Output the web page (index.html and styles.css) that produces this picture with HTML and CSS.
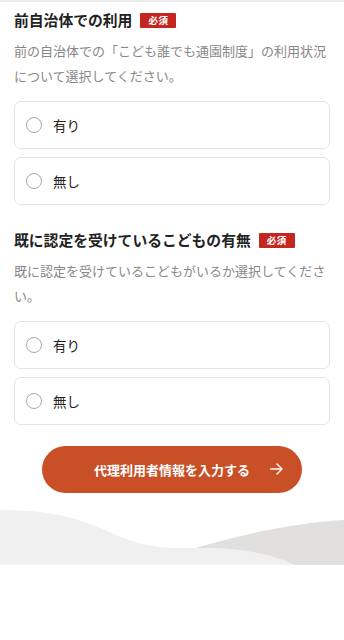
FILE: index.html
```html
<!DOCTYPE html>
<html lang="ja">
<head>
<meta charset="utf-8">
<link rel="stylesheet" href="styles.css">
</head>
<body>
<div class="topline"></div>
<main class="content">
  <section class="field first">
    <h2 class="field-title">前自治体での利用<span class="badge">必須</span></h2>
    <p class="field-desc">前の自治体での「こども誰でも通園制度」の利用状況について選択してください。</p>
    <div class="options">
      <label class="option"><span class="radio"></span><span class="option-label">有り</span></label>
      <label class="option"><span class="radio"></span><span class="option-label">無し</span></label>
    </div>
  </section>
  <section class="field second">
    <h2 class="field-title">既に認定を受けているこどもの有無<span class="badge">必須</span></h2>
    <p class="field-desc">既に認定を受けているこどもがいるか選択してください。</p>
    <div class="options">
      <label class="option"><span class="radio"></span><span class="option-label">有り</span></label>
      <label class="option"><span class="radio"></span><span class="option-label">無し</span></label>
    </div>
  </section>
  <div class="actions">
    <button class="next-btn" type="button">代理利用者情報を入力する
      <svg class="arrow" width="13" height="12" viewBox="0 0 13 12"><path d="M0.5 6 H12 M7 1 L12 6 L7 11" fill="none" stroke="#fff" stroke-width="1.4" stroke-linecap="round" stroke-linejoin="round"/></svg>
    </button>
  </div>
</main>
<div class="wave">
  <svg width="344" height="60" viewBox="0 0 344 60" preserveAspectRatio="none">
    <path d="M185 46 C235 31 290 18 344 15 L344 60 L185 60 Z" fill="#e2e0de"/>
    <path d="M0 5 C40 5 70 10 100 23 C125 34 145 43 180 43 L215 43 C245 44 275 50 295 60 L0 60 Z" fill="#f0f0f0"/>
  </svg>
</div>
</body>
</html>
```

FILE: styles.css
```css
html, body {
  margin: 0;
  padding: 0;
  background: #fff;
}
body {
  font-family: "Noto Sans CJK JP", "Noto Sans", sans-serif;
  color: #222;
}
.topline {
  height: 2px;
  background: #ececec;
}
.content {
  padding: 0 14px;
}
.field.first {
  padding-top: 7px;
}
.field.second {
  padding-top: 24px;
}
.field-title {
  margin: 0;
  display: flex;
  align-items: center;
  gap: 8px;
  font-size: 14.8px;
  line-height: 22px;
  font-weight: 700;
  color: #222;
}
.badge {
  display: inline-flex;
  align-items: center;
  justify-content: center;
  width: 36px;
  height: 15px;
  background: #c4271f;
  color: #fff;
  font-size: 9.5px;
  font-weight: 700;
  border-radius: 1px;
  letter-spacing: 0.5px;
}
.field-desc {
  margin: 8px 0 0;
  font-size: 13px;
  line-height: 24.5px;
  color: #888;
}
.options {
  margin-top: 13px;
  display: flex;
  flex-direction: column;
  gap: 8px;
}
.option {
  display: flex;
  align-items: center;
  gap: 11px;
  height: 48px;
  box-sizing: border-box;
  padding: 0 11px;
  border: 1px solid #e3e3e3;
  border-radius: 7px;
  background: #fff;
}
.radio {
  width: 16px;
  height: 16px;
  box-sizing: border-box;
  border: 1px solid #a8a8a8;
  border-radius: 50%;
  background: #fff;
}
.option-label {
  font-size: 13.5px;
  color: #222;
}
.actions {
  display: flex;
  justify-content: center;
  padding: 21px 0 12px;
}
.next-btn {
  position: relative;
  width: 260px;
  height: 47px;
  border: none;
  border-radius: 24px;
  background: #c94f26;
  color: #fff;
  font-family: inherit;
  font-size: 13px;
  font-weight: 700;
  padding: 0;
}
.arrow {
  position: absolute;
  right: 19px;
  top: 17px;
}
.wave {
  height: 60px;
  line-height: 0;
}
.wave svg {
  display: block;
  width: 100%;
  height: 60px;
}
```
